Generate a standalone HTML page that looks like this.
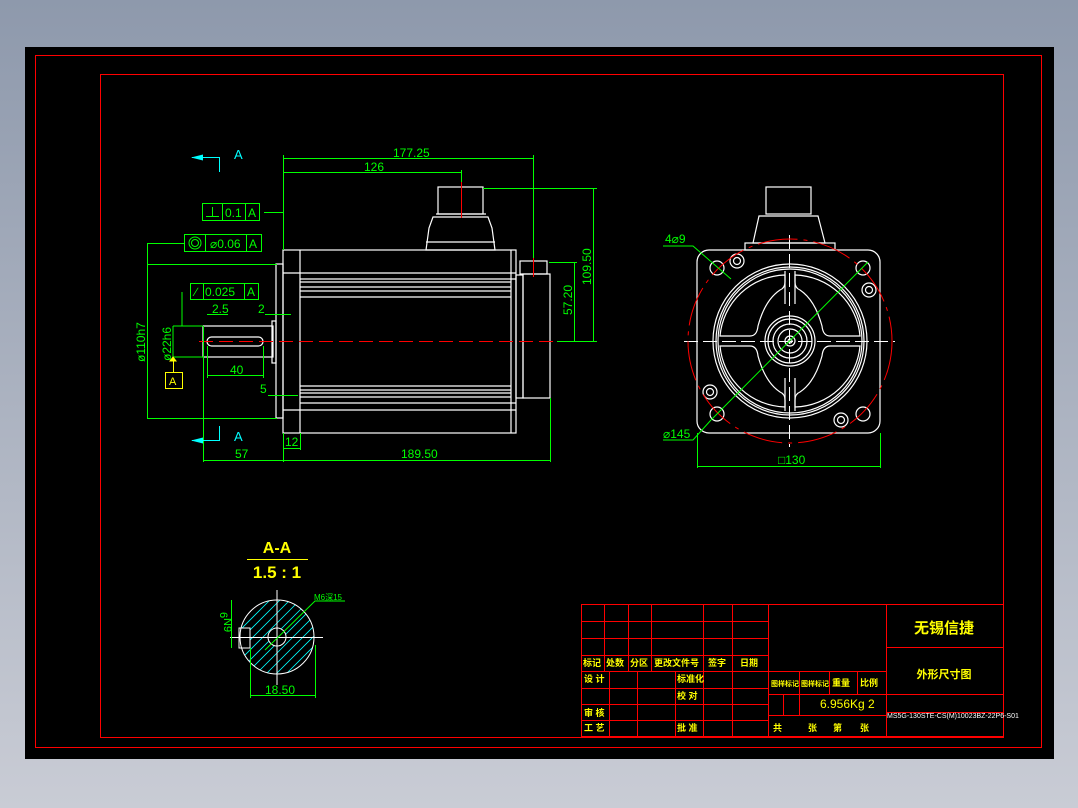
<!DOCTYPE html><html><head><meta charset="utf-8"><style>
html,body{margin:0;padding:0;width:1078px;height:808px;overflow:hidden;background:linear-gradient(#8e99ac,#c9ccd5);}
svg{position:absolute;left:0;top:0}
text{font-family:"Liberation Sans","Noto Sans CJK SC",sans-serif}
</style></head><body>
<svg width="1078" height="808" viewBox="0 0 1078 808" xmlns="http://www.w3.org/2000/svg">
<rect x="25" y="47" width="1029" height="712" fill="#000"/>
<rect x="35.5" y="55.5" width="1006" height="692" fill="none" stroke="#f00" stroke-width="1"/>
<rect x="100.5" y="74.5" width="903" height="663" fill="none" stroke="#f00" stroke-width="1"/>

<!-- Main view -->
<g fill="none" stroke="#fff" stroke-width="1.2">
<rect x="283" y="250" width="233" height="183"/>
<line x1="300" y1="250" x2="300" y2="433"/>
<line x1="511" y1="250" x2="511" y2="433"/>
<line x1="283" y1="273" x2="516" y2="273"/>
<line x1="283" y1="410" x2="516" y2="410"/>
<line x1="300" y1="279" x2="516" y2="279"/><line x1="300" y1="282" x2="511" y2="282"/>
<line x1="300" y1="287" x2="511" y2="287"/><line x1="300" y1="291" x2="511" y2="291"/><line x1="300" y1="297" x2="511" y2="297"/>
<line x1="300" y1="386" x2="511" y2="386"/><line x1="300" y1="390" x2="511" y2="390"/><line x1="300" y1="393" x2="511" y2="393"/><line x1="300" y1="397" x2="511" y2="397"/><line x1="300" y1="403" x2="516" y2="403"/>
<rect x="516" y="275" width="7" height="123"/>
<rect x="523" y="274" width="27" height="124"/>
<rect x="520" y="261" width="27" height="13"/>
<rect x="276" y="264" width="7" height="154"/>
<rect x="272" y="321" width="4" height="42"/>
<rect x="203" y="326" width="70" height="31"/>
<rect x="207" y="337" width="56" height="9" rx="4.5"/>
<rect x="438" y="187" width="45" height="27"/>
<path d="M433 217 L488 217 L492 228 L495 250 L426 250 L429 228 Z"/>
<line x1="426" y1="242" x2="495" y2="242"/>
<line x1="436" y1="214" x2="486" y2="214"/>
</g>
<line x1="199" y1="341.5" x2="557" y2="341.5" stroke="#f00" stroke-dasharray="14,6"/>
<line x1="461.5" y1="182" x2="461.5" y2="218" stroke="#f00"/>
<line x1="533.5" y1="256" x2="533.5" y2="277" stroke="#f00"/>

<g stroke="#0f0" stroke-width="1" fill="none">
<line x1="283.5" y1="155" x2="283.5" y2="250"/>
<line x1="283" y1="158.5" x2="533" y2="158.5"/>
<line x1="533.5" y1="155" x2="533.5" y2="258"/>
<line x1="283" y1="172.5" x2="461" y2="172.5"/>
<line x1="461.5" y1="170" x2="461.5" y2="182"/>
<line x1="483" y1="188.5" x2="597" y2="188.5"/>
<line x1="549" y1="262.5" x2="577" y2="262.5"/>
<line x1="557" y1="341.5" x2="597" y2="341.5"/>
<line x1="593.5" y1="188" x2="593.5" y2="341"/>
<line x1="574.5" y1="262" x2="574.5" y2="341"/>
<line x1="147.5" y1="243" x2="147.5" y2="418"/>
<line x1="147" y1="264.5" x2="277" y2="264.5"/>
<line x1="147" y1="418.5" x2="277" y2="418.5"/>
<line x1="147" y1="243.5" x2="184" y2="243.5"/>
<rect x="202.5" y="203.5" width="57" height="17"/><line x1="222.5" y1="203" x2="222.5" y2="220"/><line x1="245.5" y1="203" x2="245.5" y2="220"/>
<path d="M206 216.5 H219 M212.5 207 V216.5"/>
<line x1="264" y1="212.5" x2="283" y2="212.5"/>
<rect x="184.5" y="234.5" width="77" height="17"/><line x1="205.5" y1="234" x2="205.5" y2="251"/><line x1="246.5" y1="234" x2="246.5" y2="251"/>
<circle cx="195" cy="243" r="6"/><circle cx="195" cy="243" r="3.5"/>
<rect x="190.5" y="283.5" width="68" height="16"/><line x1="203.5" y1="283" x2="203.5" y2="299"/><line x1="244.5" y1="283" x2="244.5" y2="299"/>
<path d="M182 292 L182 326 M173 326 L203 326 M173 326 L173 357 M173 357 L203 357"/>
<line x1="203.5" y1="326" x2="203.5" y2="462"/>
<line x1="207.5" y1="346" x2="207.5" y2="378"/><line x1="263.5" y1="346" x2="263.5" y2="378"/>
<line x1="207" y1="375.5" x2="263" y2="375.5"/>
<line x1="203" y1="460.5" x2="550" y2="460.5"/>
<line x1="550.5" y1="398" x2="550.5" y2="462"/>
<line x1="283.5" y1="433" x2="283.5" y2="462"/>
<line x1="300.5" y1="433" x2="300.5" y2="450"/>
<line x1="283" y1="448.5" x2="300" y2="448.5"/>
<line x1="265" y1="314.5" x2="291" y2="314.5"/>
<line x1="268" y1="395.5" x2="298" y2="395.5"/>
<line x1="207" y1="314.5" x2="228" y2="314.5"/>
</g>
<g fill="#0f0" font-size="12">
<text x="393" y="157">177.25</text><text x="364" y="171">126</text>
<text x="225" y="217">0.1</text><text x="248" y="217">A</text>
<text x="210" y="248">⌀0.06</text><text x="249" y="248">A</text>
<text x="195" y="296">∕</text><text x="205" y="296">0.025</text><text x="247" y="296">A</text>
<text x="212" y="313">2.5</text><text x="258" y="313">2</text>
<text x="230" y="374">40</text><text x="260" y="393">5</text>
<text x="235" y="458">57</text><text x="401" y="458">189.50</text><text x="285" y="446">12</text>
<text transform="translate(591,285) rotate(-90)">109.50</text>
<text transform="translate(572,315) rotate(-90)">57.20</text>
<text transform="translate(145,362) rotate(-90)">ø110h7</text>
<text transform="translate(171,361) rotate(-90)">ø22h6</text>
</g>
<rect x="165.5" y="372.5" width="17" height="16" fill="none" stroke="#ff0"/>
<text x="169" y="385" fill="#ff0" font-size="11">A</text>
<path d="M173 357 L170 361 L176 361 Z M173.5 361 L173.5 372" fill="#ff0" stroke="#ff0"/>
<g stroke="#0ff" fill="none">
<path d="M192 157.5 L219.5 157.5 L219.5 172"/>
<path d="M192 440.5 L219.5 440.5 L219.5 426"/>
</g>
<g fill="#0ff"><path d="M191 157.5 L203 154.5 L203 160.5 Z"/><path d="M191 440.5 L203 437.5 L203 443.5 Z"/></g>
<text x="234" y="159" fill="#0ff" font-size="13">A</text>
<text x="234" y="441" fill="#0ff" font-size="13">A</text>

<!-- Right view -->
<g fill="none" stroke="#fff" stroke-width="1.2">
<rect x="697" y="250" width="183" height="183" rx="12"/>
<rect x="766" y="187" width="45" height="27"/>
<path d="M759 216 L818 216 L825 243 L753 243 Z"/>
<rect x="745" y="243" width="90" height="7"/>
<circle cx="790" cy="341" r="77"/><circle cx="790" cy="341" r="74"/><circle cx="790" cy="341" r="72"/>
<circle cx="790" cy="341" r="25"/><circle cx="790" cy="341" r="22"/><circle cx="790" cy="341" r="17"/><circle cx="790" cy="341" r="12"/><circle cx="790" cy="341" r="5"/><circle cx="790" cy="341" r="2"/>
<path d="M785 271 L785 304 M795 271 L795 304 M785 378 L785 411 M795 378 L795 411"/>
<path d="M720 336 L750 336 Q757 336 758 326 Q765 300 780 290 Q785 288 785 282 L785 275 A67 67 0 0 0 720 336 Z"/>
<path d="M860 336 L830 336 Q823 336 822 326 Q815 300 800 290 Q795 288 795 282 L795 275 A67 67 0 0 1 860 336 Z"/>
<path d="M720 346 L750 346 Q757 346 758 356 Q765 382 780 392 Q785 394 785 400 L785 407 A67 67 0 0 1 720 346 Z"/>
<path d="M860 346 L830 346 Q823 346 822 356 Q815 382 800 392 Q795 394 795 400 L795 407 A67 67 0 0 0 860 346 Z"/>
<circle cx="717" cy="268" r="7"/><circle cx="863" cy="268" r="7"/><circle cx="717" cy="414" r="7"/><circle cx="863" cy="414" r="7"/>
<circle cx="737" cy="261" r="7"/><circle cx="737" cy="261" r="3.5"/>
<circle cx="869" cy="290" r="7"/><circle cx="869" cy="290" r="3.5"/>
<circle cx="710" cy="392" r="7"/><circle cx="710" cy="392" r="3.5"/>
<circle cx="841" cy="420" r="7"/><circle cx="841" cy="420" r="3.5"/>
</g>
<g stroke="#fff" stroke-dasharray="14,5"><line x1="684" y1="341.5" x2="895" y2="341.5"/><line x1="789.5" y1="235" x2="789.5" y2="447"/></g>
<circle cx="790" cy="341" r="102" fill="none" stroke="#f00" stroke-dasharray="40,6,4,6"/>
<g stroke="#0f0" fill="none">
<line x1="711" y1="420" x2="868" y2="262"/>
<path d="M663 246 L693 246 L731 279"/>
<path d="M663 440 L693 440 L711 420"/>
<line x1="697.5" y1="433" x2="697.5" y2="468"/><line x1="880.5" y1="433" x2="880.5" y2="468"/>
<line x1="697" y1="466.5" x2="880" y2="466.5"/>
</g>
<g fill="#0f0" font-size="12"><text x="665" y="243">4⌀9</text><text x="663" y="438">⌀145</text><text x="778" y="464">□130</text></g>

<!-- Section A-A -->
<text x="277" y="553" fill="#ff0" font-size="16" font-weight="bold" text-anchor="middle" font-family="Liberation Mono">A-A</text>
<line x1="247" y1="559.5" x2="308" y2="559.5" stroke="#ff0"/>
<text x="277" y="578" fill="#ff0" font-size="17" font-weight="bold" text-anchor="middle" font-family="Liberation Mono">1.5 : 1</text>
<defs><clipPath id="cc"><circle cx="277" cy="637" r="37"/></clipPath></defs>
<g clip-path="url(#cc)" stroke="#0ff" stroke-width="0.8">
<path d="M220 680 L300 600 M230 680 L310 600 M240 680 L320 600 M250 680 L330 600 M260 680 L340 600 M270 680 L350 600 M280 680 L360 600 M210 680 L290 600 M200 680 L280 600 M190 680 L270 600"/>
</g>
<rect x="239" y="628" width="11" height="20" fill="#000" stroke="#fff"/>
<circle cx="277" cy="637" r="37" fill="none" stroke="#fff"/>
<circle cx="277" cy="637" r="9" fill="#000" stroke="#fff"/>
<g stroke="#fff"><line x1="277" y1="590" x2="277" y2="685"/><line x1="230" y1="637.5" x2="323" y2="637.5"/></g>
<g stroke="#0f0" fill="none"><path d="M265 650 L315 601 L345 601"/><line x1="231.5" y1="600" x2="231.5" y2="648"/><line x1="250.5" y1="648" x2="250.5" y2="698"/><line x1="315.5" y1="645" x2="315.5" y2="698"/><line x1="250" y1="695.5" x2="315" y2="695.5"/></g>
<g fill="#0f0" font-size="11"><text x="314" y="600" font-size="8">M6深15</text><text x="265" y="694" font-size="12">18.50</text>
<text transform="translate(224,618) rotate(90)">N9</text><text transform="translate(220,612) rotate(90)">6</text></g>

<!-- Title block -->
<g stroke="#f00" fill="none">
<rect x="581.5" y="604.5" width="422" height="132"/>
<line x1="768.5" y1="604" x2="768.5" y2="737"/><line x1="886.5" y1="604" x2="886.5" y2="737"/>
<path d="M604.5 604 V671 M628.5 604 V671 M651.5 604 V671 M703.5 604 V737 M732.5 604 V737"/>
<path d="M609.5 671 V737 M637.5 671 V737 M675.5 671 V737"/>
<path d="M581 621.5 H768 M581 638.5 H768 M581 655.5 H768 M581 671.5 H768 M581 688.5 H768 M581 704.5 H768 M581 720.5 H768"/>
<path d="M768 671.5 H886 M768 694.5 H886 M768 715.5 H886 M799.5 671 V715 M829.5 671 V694 M857.5 671 V694 M783.5 694 V715"/>
<path d="M886 647.5 H1003 M886 694.5 H1003 M886 712.5 H1003"/>
</g>
<g fill="#ff0" font-size="9" font-family="Liberation Sans,'Noto Sans CJK SC',sans-serif" font-weight="bold">
<text x="583" y="666">标记</text><text x="606" y="666">处数</text><text x="630" y="666">分区</text><text x="654" y="666">更改文件号</text><text x="708" y="666">签字</text><text x="740" y="666">日期</text>
<text x="584" y="682">设 计</text><text x="677" y="682">标准化</text><text x="677" y="699">校 对</text>
<text x="584" y="716">审 核</text><text x="584" y="731">工 艺</text><text x="677" y="731">批 准</text>
<text x="771" y="686" font-size="7">图样标记</text><text x="801" y="686" font-size="7">图样标记</text><text x="832" y="686">重量</text><text x="860" y="686">比例</text>
<text x="773" y="731">共</text><text x="808" y="731">张</text><text x="833" y="731">第</text><text x="860" y="731">张</text>
<text x="944" y="633" font-size="15" text-anchor="middle">无锡信捷</text>
<text x="944" y="678" font-size="11" text-anchor="middle">外形尺寸图</text>
</g>
<text x="820" y="708" fill="#ff0" font-size="12">6.956Kg 2</text>
<text x="887" y="718" fill="#fff" font-size="7">MS5G-130STE-CS(M)10023BZ-22P6-S01</text>
</svg>
</body></html>
